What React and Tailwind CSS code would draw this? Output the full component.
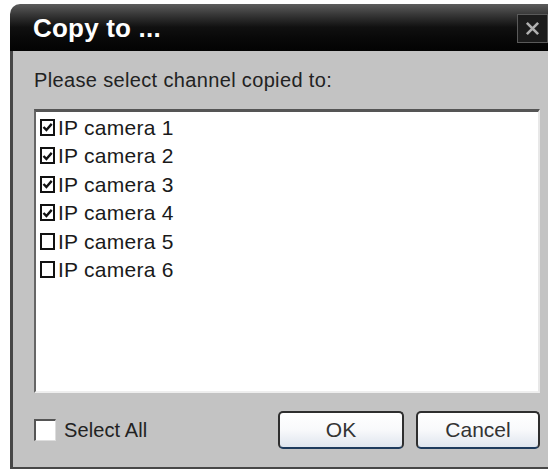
import React, { useState } from "react";

const cameras = [
  { id: 1, name: "IP camera 1", checked: true },
  { id: 2, name: "IP camera 2", checked: true },
  { id: 3, name: "IP camera 3", checked: true },
  { id: 4, name: "IP camera 4", checked: true },
  { id: 5, name: "IP camera 5", checked: false },
  { id: 6, name: "IP camera 6", checked: false },
];

const CheckMark = () => (
  <svg viewBox="0 0 12 12" className="w-[11px] h-[12px]">
    <path d="M1.6 6 L4.8 9.2 L10.6 2.6" fill="none" stroke="#111" strokeWidth="2.6" />
  </svg>
);

const App = () => {
  const [items, setItems] = useState(cameras);
  const [selectAll, setSelectAll] = useState(false);

  const toggle = (id) => {
    setItems(items.map((c) => (c.id === id ? { ...c, checked: !c.checked } : c)));
  };

  return (
    <div
      className="w-[548px] h-[469px] bg-white pt-[4px] pl-[10px] overflow-hidden"
      style={{ fontFamily: "'Liberation Sans', Arial, sans-serif" }}
    >
      <div className="w-[538px] h-[465px] flex flex-col">
        {/* title bar */}
        <div className="h-[47px] rounded-tl-[10px] bg-gradient-to-b from-[#5c5c5c] via-[#101010] to-[#030303] flex items-center justify-between pl-[23px]">
          <span className="text-white font-bold text-[26px] leading-none tracking-[0.2px]">Copy to ...</span>
          <button className="w-[31px] h-[29px] mt-[1px] border border-[#5a5a5a] bg-[#1c1c1c] flex items-center justify-center">
            <svg viewBox="0 0 16 16" className="w-[15px] h-[15px]">
              <path d="M2 2 L14 14 M14 2 L2 14" stroke="#b0b0b0" strokeWidth="2.8" />
            </svg>
          </button>
        </div>

        {/* body */}
        <div className="flex-1 flex flex-col bg-[#c3c3c3] border-l-[3px] border-b-[2px] border-[#474747] pl-[21px] pr-[8px]">
          <p className="pt-[19px] text-[20px] leading-[20px] text-[#222] tracking-[0.35px]">Please select channel copied to:</p>

          <div className="mt-[19px] h-[284px] bg-white border-t-[3px] border-l-[2px] border-t-[#555] border-l-[#666] border-r-[2px] border-b-[2px] border-r-[#e8e8e8] border-b-[#eeeeee] pt-[1px] pl-[4px]">
            {items.map((c) => (
              <div
                key={c.id}
                className="h-[28.5px] flex items-center gap-[3px] cursor-pointer"
                onClick={() => toggle(c.id)}
              >
                <span className="w-[15px] h-[17px] border-[2.5px] border-[#111] bg-white flex items-center justify-center">
                  {c.checked && <CheckMark />}
                </span>
                <span className="text-[21px] leading-none text-[#1a1a1a] tracking-[0.25px]">{c.name}</span>
              </div>
            ))}
          </div>

          <div className="flex items-center mt-[18px]">
            <label className="flex items-center gap-[8px] cursor-pointer" onClick={() => setSelectAll(!selectAll)}>
              <span className="w-[22px] h-[22px] bg-white border-t-[2px] border-l-[2px] border-t-[#555] border-l-[#555] border-r border-b border-r-[#ddd] border-b-[#ddd] flex items-center justify-center">
                {selectAll && <CheckMark />}
              </span>
              <span className="text-[20px] text-[#222] tracking-[0.1px]">Select All</span>
            </label>

            <div className="ml-auto flex gap-[12px]">
              <button className="w-[126px] h-[38px] rounded-[5px] border-[2px] border-[#2e2e2e] border-b-[#1d3a5c] bg-gradient-to-b from-white via-[#f8f9fb] to-[#dfe5ee] text-[21px] text-[#333]">
                OK
              </button>
              <button className="w-[124px] h-[38px] rounded-[5px] border-[2px] border-[#2e2e2e] border-b-[#1d3a5c] bg-gradient-to-b from-white via-[#f8f9fb] to-[#dfe5ee] text-[21px] text-[#333]">
                Cancel
              </button>
            </div>
          </div>
        </div>
      </div>
    </div>
  );
};

export default App;
